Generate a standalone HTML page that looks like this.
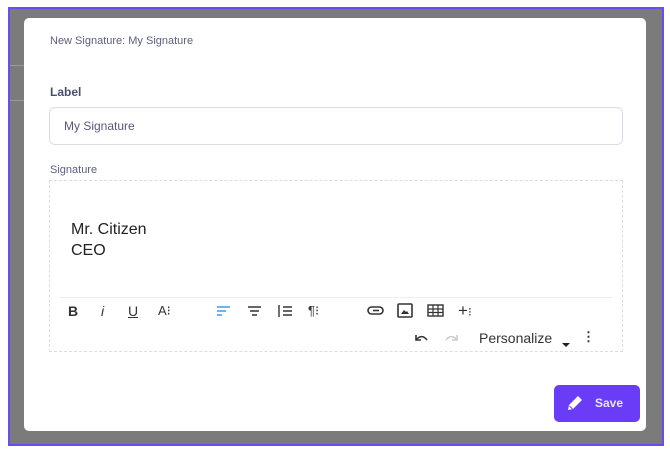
<!DOCTYPE html>
<html><head><style>
body{margin:0;width:670px;height:453px;background:#fff;position:relative;overflow:hidden;font-family:"Liberation Sans",sans-serif;}
.a{position:absolute;}
.frame{left:8px;top:7px;width:652px;height:435px;border:2px solid #6a4cf0;background:#7b7b7b;}
.modal{left:24px;top:18px;width:622px;height:413px;background:#fff;border-radius:5px;}
.t{color:#5a5f80;font-size:11px;}
.ic{font-size:14px;color:#333;top:303px;}
</style></head><body>
<div class="a frame"></div>
<div class="a" style="left:10px;top:65px;width:14px;height:1px;background:#999"></div>
<div class="a" style="left:10px;top:100px;width:14px;height:1px;background:#999"></div>
<div class="a" style="left:20px;top:343px;color:#222;font-size:12px;font-weight:bold">⋮</div>
<div class="a modal"></div>
<div class="a t" style="left:50px;top:35px">New Signature: My Signature</div>
<div class="a" style="left:50px;top:85px;font-size:12px;font-weight:bold;color:#4a4f70">Label</div>
<div class="a" style="left:49px;top:107px;width:572px;height:36px;border:1px solid #dcdce8;border-radius:6px"></div>
<div class="a" style="left:64px;top:119px;font-size:12px;color:#555a78">My Signature</div>
<div class="a t" style="left:50px;top:164px">Signature</div>
<div class="a" style="left:49px;top:180px;width:572px;height:170px;border:1px dashed #ddd"></div>
<div class="a" style="left:71px;top:219px;font-size:16px;color:#222;line-height:21px">Mr. Citizen<br>CEO</div>
<div class="a" style="left:60px;top:297px;width:552px;height:1px;background:#eee"></div>
<div class="a ic" style="left:68px;font-weight:bold">B</div>
<div class="a ic" style="left:101px;font-style:italic">i</div>
<div class="a ic" style="left:128px;text-decoration:underline">U</div>
<div class="a ic" style="left:158px;font-size:13px">A⁝</div>
<svg class="a" style="left:216px;top:304px" width="16" height="14"><path d="M1 3h13M1 7h9M1 11h5" stroke="#3b9cf5" stroke-width="1.6"/></svg>
<svg class="a" style="left:247px;top:304px" width="16" height="14"><path d="M1 3h13M3 7h9M5 11h5" stroke="#333" stroke-width="1.6"/></svg>
<svg class="a" style="left:277px;top:304px" width="16" height="14"><path d="M6 3h9M6 7h9M6 11h9M2 1v12" stroke="#333" stroke-width="1.4"/></svg>
<div class="a ic" style="left:308px;font-size:13px">¶⁝</div>
<svg class="a" style="left:367px;top:305px" width="18" height="12"><rect x="1" y="2" width="15" height="7" rx="3.5" fill="none" stroke="#333" stroke-width="1.6"/><path d="M6 5.5h6" stroke="#333" stroke-width="1.6"/></svg>
<svg class="a" style="left:397px;top:303px" width="16" height="15"><rect x="1" y="1" width="14" height="13" rx="1" fill="none" stroke="#333" stroke-width="1.6"/><path d="M4 11l3-4 2 2 1-1 2 3z" fill="#333"/></svg>
<svg class="a" style="left:427px;top:304px" width="17" height="13"><rect x="1" y="1" width="15" height="11" fill="none" stroke="#333" stroke-width="1.4"/><path d="M1 5h15M1 8.5h15M6 1v11M11 1v11" stroke="#333" stroke-width="1.2"/></svg>
<div class="a ic" style="left:458px;top:301px;font-size:17px">+<span style="font-size:12px">⁝</span></div>
<svg class="a" style="left:413px;top:332px" width="16" height="12"><path d="M3 3v5h5" fill="none" stroke="#333" stroke-width="1.6"/><path d="M3 8c4-5 8-4 11 0" fill="none" stroke="#333" stroke-width="1.6"/></svg>
<svg class="a" style="left:444px;top:332px" width="16" height="12"><path d="M13 3v5h-5" fill="none" stroke="#ccc" stroke-width="1.6"/><path d="M13 8c-4-5-8-4-11 0" fill="none" stroke="#ccc" stroke-width="1.6"/></svg>
<div class="a" style="left:479px;top:330px;font-size:14px;color:#333">Personalize</div>
<div class="a" style="left:562px;top:343px;width:0;height:0;border-left:4px solid transparent;border-right:4px solid transparent;border-top:4px solid #222"></div>
<div class="a" style="left:582px;top:329px;font-size:13px;color:#333;font-weight:bold">⋮</div>
<div class="a" style="left:554px;top:385px;width:86px;height:37px;background:#6a3cf7;border-radius:5px"></div>
<svg class="a" style="left:565px;top:393px" width="20" height="20"><path d="M3 17l1-5 9-9 4 4-9 9z" fill="#fff"/><path d="M4.5 13l3 3" stroke="#6a3cf7" stroke-width="1"/></svg>
<div class="a" style="left:595px;top:396px;font-size:12px;font-weight:bold;color:#e8e4ff">Save</div>
</body></html>
